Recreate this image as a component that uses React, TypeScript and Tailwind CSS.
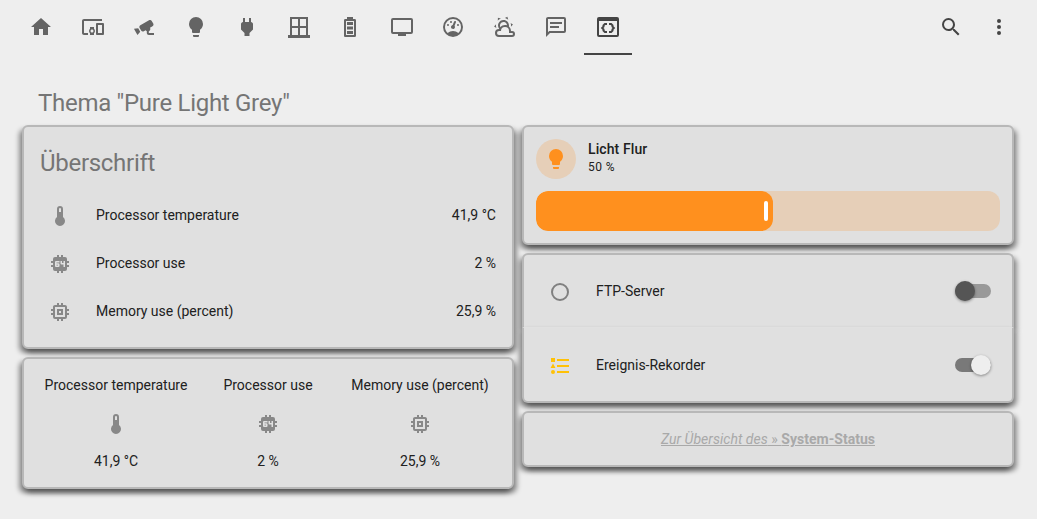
import type { ReactNode } from "react";

const ICONS = {
  home: "M10,20V14H14V20H19V12H22L12,3L2,12H5V20H10Z",
  devices:
    "M3 6h18V4H3c-1.1 0-2 .9-2 2v12c0 1.1.9 2 2 2h4v-2H3V6zm10 6H9v1.78c-.61.55-1 1.33-1 2.22s.39 1.67 1 2.22V20h4v-1.78c.61-.55 1-1.34 1-2.22s-.39-1.67-1-2.22V12zm-2 5.5c-.83 0-1.5-.67-1.5-1.5s.67-1.5 1.5-1.5 1.5.67 1.5 1.5-.67 1.5-1.5 1.5zM22 8h-6c-.5 0-1 .5-1 1v10c0 .5.5 1 1 1h6c.5 0 1-.5 1-1V9c0-.5-.5-1-1-1zm-1 10h-4v-8h4v8z",
  cctv: "M18.15,4.94C17.77,4.91 17.37,5 17,5.2L8.35,10.2C7.39,10.76 7.07,12 7.62,12.94L9.12,15.53C9.67,16.5 10.89,16.82 11.85,16.27L13.65,15.23C13.92,15.69 14.32,16.06 14.81,16.27V18.04C14.81,19.13 15.7,20 16.81,20H22V18.04H16.81V16.27C17.72,15.87 18.31,14.97 18.31,14C18.31,13.54 18.19,13.11 17.97,12.73L20.5,11.27C21.47,10.71 21.8,9.5 21.24,8.53L19.74,5.94C19.4,5.34 18.79,5 18.15,4.94M6.22,13.17L2,13.87L2.75,15.17L4.75,18.63L5.5,19.93L8.22,16.63L6.22,13.17Z",
  bulb: "M12,2A7,7 0 0,0 5,9C5,11.38 6.19,13.47 8,14.74V17A1,1 0 0,0 9,18H15A1,1 0 0,0 16,17V14.74C17.81,13.47 19,11.38 19,9A7,7 0 0,0 12,2M9,21A1,1 0 0,0 10,22H14A1,1 0 0,0 15,21V20H9V21Z",
  plug: "M16,7V3H14V7H10V3H8V7H8C7,7 6,8 6,9V14.5L9.5,18V21H14.5V18L18,14.5V9C18,8 17,7 16,7Z",
  window: "M21 20V2H3V20H1V23H23V20M19 4V11H13V4M5 4H11V11H5M5 20V13H11V20M13 20V13H19V20Z",
  battery:
    "M16,20H8V6H16M16.67,4H15V2H9V4H7.33A1.33,1.33 0 0,0 6,5.33V20.67C6,21.4 6.6,22 7.33,22H16.67A1.33,1.33 0 0,0 18,20.67V5.33C18,4.6 17.4,4 16.67,4M15,16H9V19H15V16M15,7H9V10H15V7M15,11.5H9V14.5H15V11.5Z",
  tv: "M21,17H3V5H21M21,3H3A2,2 0 0,0 1,5V17A2,2 0 0,0 3,19H8V21H16V19H21A2,2 0 0,0 23,17V5A2,2 0 0,0 21,3Z",
  gauge:
    "M12,2A10,10 0 0,0 2,12A10,10 0 0,0 12,22A10,10 0 0,0 22,12A10,10 0 0,0 12,2M12,4A8,8 0 0,1 20,12C20,14.4 19,16.5 17.3,18C15.9,16.7 14,16 12,16C10,16 8.2,16.7 6.7,18C5,16.5 4,14.4 4,12A8,8 0 0,1 12,4M14,5.89C13.62,5.9 13.26,6.15 13.1,6.54L11.81,9.77L11.71,10C11,10.13 10.41,10.6 10.14,11.26C9.73,12.29 10.23,13.45 11.26,13.86C12.29,14.27 13.45,13.77 13.86,12.74C14.12,12.08 14,11.32 13.57,10.76L13.67,10.5L14.96,7.29L14.97,7.26C15.17,6.75 14.92,6.17 14.41,5.96C14.28,5.91 14.15,5.89 14,5.89M10,6A1,1 0 0,0 9,7A1,1 0 0,0 10,8A1,1 0 0,0 11,7A1,1 0 0,0 10,6M7,9A1,1 0 0,0 6,10A1,1 0 0,0 7,11A1,1 0 0,0 8,10A1,1 0 0,0 7,9M17,9A1,1 0 0,0 16,10A1,1 0 0,0 17,11A1,1 0 0,0 18,10A1,1 0 0,0 17,9Z",
  weather:
    "M12.74,5.47C15.1,6.5 16.35,9.03 15.92,11.46C17.19,12.56 18,14.19 18,16V16.17C18.31,16.06 18.65,16 19,16A3,3 0 0,1 22,19A3,3 0 0,1 19,22H6A4,4 0 0,1 2,18A4,4 0 0,1 6,14H6.27C5,12.45 4.6,10.24 5.5,8.26C6.72,5.5 9.97,4.24 12.74,5.47M11.93,7.3C10.16,6.5 8.09,7.31 7.31,9.07C6.85,10.09 6.93,11.22 7.41,12.13C8.5,10.83 10.16,10 12,10C12.7,10 13.38,10.12 14,10.34C13.94,9.06 13.18,7.86 11.93,7.3M13.55,3.64C13,3.4 12.45,3.23 11.88,3.12L14.37,1.82L15.27,4.71C14.76,4.29 14.19,3.93 13.55,3.64M6.09,4.44C5.6,4.79 5.17,5.19 4.8,5.63L4.91,2.82L7.87,3.5C7.25,3.71 6.65,4.03 6.09,4.44M18,9.71C17.91,9.12 17.78,8.55 17.59,8L19.97,9.5L17.92,11.73C18.03,11.08 18.05,10.4 18,9.71M3.04,11.3C3.11,11.9 3.24,12.47 3.43,13L1.06,11.5L3.1,9.28C2.97,9.93 2.95,10.61 3.04,11.3M19,18H16V16A4,4 0 0,0 12,12A4,4 0 0,0 8,16H6A2,2 0 0,0 4,18A2,2 0 0,0 6,20H19A1,1 0 0,0 20,19A1,1 0 0,0 19,18Z",
  message:
    "M20,2A2,2 0 0,1 22,4V16A2,2 0 0,1 20,18H6L2,22V4C2,2.89 2.9,2 4,2H20M4,4V17.17L5.17,16H20V4H4M6,7H18V9H6V7M6,11H15V13H6V11Z",
  iframe:
    "M21,2H3A2,2 0 0,0 1,4V20A2,2 0 0,0 3,22H21A2,2 0 0,0 23,20V4A2,2 0 0,0 21,2M21,20H3V6H21V20M11,8H8.5L6.5,10V11.2L4.8,13L6.5,14.8V16L8.5,18H11V16H9.3L8.5,15.2V14L7.5,13L8.5,12V10.8L9.3,10H11V8M13,8H15.5L17.5,10V11.2L19.2,13L17.5,14.8V16L15.5,18H13V16H14.7L15.5,15.2V14L16.5,13L15.5,12V10.8L14.7,10H13V8Z",
  search:
    "M9.5,3A6.5,6.5 0 0,1 16,9.5C16,11.11 15.41,12.59 14.44,13.73L14.71,14H15.5L20.5,19L19,20.5L14,15.5V14.71L13.73,14.44C12.59,15.41 11.11,16 9.5,16A6.5,6.5 0 0,1 3,9.5A6.5,6.5 0 0,1 9.5,3M9.5,5C7,5 5,7 5,9.5C5,12 7,14 9.5,14C12,14 14,12 14,9.5C14,7 12,5 9.5,5Z",
  dots: "M12,16A2,2 0 0,1 14,18A2,2 0 0,1 12,20A2,2 0 0,1 10,18A2,2 0 0,1 12,16M12,10A2,2 0 0,1 14,12A2,2 0 0,1 12,14A2,2 0 0,1 10,12A2,2 0 0,1 12,10M12,4A2,2 0 0,1 14,6A2,2 0 0,1 12,8A2,2 0 0,1 10,6A2,2 0 0,1 12,4Z",
  thermometer: "M15 13V5A3 3 0 0 0 9 5V13A5 5 0 1 0 15 13M12 4A1 1 0 0 1 13 5V8H11V5A1 1 0 0 1 12 4Z",
  cpu: "M9,3V5H7A2,2 0 0,0 5,7V9H3V11H5V13H3V15H5V17A2,2 0 0,0 7,19H9V21H11V19H13V21H15V19H17A2,2 0 0,0 19,17V15H21V13H19V11H21V9H19V7A2,2 0 0,0 17,5H15V3H13V5H11V3M8,9H11.5V10.5H8.5V11.25H10.5A1,1 0 0,1 11.5,12.25V14A1,1 0 0,1 10.5,15H8A1,1 0 0,1 7,14V10A1,1 0 0,1 8,9M12.5,9H14V11H15.5V9H17V15H15.5V12.5H13.5A1,1 0 0,1 12.5,11.5M8.5,12.75V13.5H10V12.75",
  memory:
    "M17,17H7V7H17M21,11V9H19V7C19,5.89 18.1,5 17,5H15V3H13V5H11V3H9V5H7C5.89,5 5,5.89 5,7V9H3V11H5V13H3V15H5V17A2,2 0 0,0 7,19H9V21H11V19H13V21H15V19H17A2,2 0 0,0 19,17V15H21V13H19V11M13,13H11V11H13M15,9H9V15H15V9Z",
  circle:
    "M12,19A7,7 0 0,1 5,12A7,7 0 0,1 12,5A7,7 0 0,1 19,12A7,7 0 0,1 12,19M12,3A9,9 0 0,0 3,12A9,9 0 0,0 12,21A9,9 0 0,0 21,12A9,9 0 0,0 12,3Z",
  list: "M5,9.5L7.5,14H2.5L5,9.5M3,4H7V8H3V4M5,20A2,2 0 0,0 7,18A2,2 0 0,0 5,16A2,2 0 0,0 3,18A2,2 0 0,0 5,20M9,5V7H21V5H9M9,19H21V17H9V19M9,13H21V11H9V13Z",
};

type IconName = keyof typeof ICONS;

function Icon({ name, className = "" }: { name: IconName; className?: string }) {
  return (
    <svg viewBox="0 0 24 24" fill="currentColor" className={`size-6 shrink-0 ${className}`}>
      <path d={ICONS[name]} />
    </svg>
  );
}

const TABS: IconName[] = [
  "home", "devices", "cctv", "bulb", "plug", "window",
  "battery", "tv", "gauge", "weather", "message", "iframe",
];

const SENSORS: { icon: IconName; name: string; value: string }[] = [
  { icon: "thermometer", name: "Processor temperature", value: "41,9 °C" },
  { icon: "cpu", name: "Processor use", value: "2 %" },
  { icon: "memory", name: "Memory use (percent)", value: "25,9 %" },
];

const SURFACE =
  "border-[#b8b8b8] bg-[#e0e0e0] shadow-[-3px_4px_5px_rgba(0,0,0,0.4),3px_4px_5px_rgba(0,0,0,0.4)]";

function Card({ className = "", children }: { className?: string; children: ReactNode }) {
  return <section className={`rounded-md border-2 ${SURFACE} ${className}`}>{children}</section>;
}

function Toggle({ on = false }: { on?: boolean }) {
  return (
    <div className={`flex h-3.5 w-9 items-center rounded-full ${on ? "justify-end bg-[#797979]" : "bg-[#999999]"}`}>
      <span
        className={`size-5 shrink-0 rounded-full shadow-[0_1px_3px_rgba(0,0,0,0.4)] ${on ? "bg-[#eeeeee]" : "bg-[#555555]"}`}
      />
    </div>
  );
}

function EntityRow({ icon, name, on, color }: { icon: IconName; name: string; on?: boolean; color: string }) {
  return (
    <div className="flex h-10 items-center pl-6 pr-[21px]">
      <Icon name={icon} className={`relative top-px size-6 ${color}`} />
      <span className="ml-6 grow">{name}</span>
      <Toggle on={on} />
    </div>
  );
}

export default function App() {
  return (
    <div className="h-[519px] w-[1037px] overflow-hidden bg-[#eeeeee] font-[Roboto,sans-serif] text-sm leading-5 text-[#212121]">
      <header className="flex h-14 items-start pl-[17px] pr-3.5">
        <nav className="flex grow gap-[3.52px] text-[#646464]">
          {TABS.map((tab) => (
            <div
              key={tab}
              className={`flex h-[55px] w-12 justify-center border-b-2 pt-[15px] ${tab === "iframe" ? "border-[#444444] text-[#444444]" : "border-transparent"}`}
            >
              <Icon name={tab} />
            </div>
          ))}
        </nav>
        <div className="flex gap-6 pt-[15px] text-[#444444]">
          <Icon name="search" />
          <Icon name="dots" className="mr-3" />
        </div>
      </header>

      <h1 className="ml-[38px] mt-[31px] h-[38px] text-2xl leading-8 tracking-[-0.012em] text-[#757575]">
        Thema "Pure Light Grey"
      </h1>

      <main className="grid grid-cols-[492px_492px] items-start gap-x-2 pl-[22px]">
        <div className="flex flex-col gap-2">
          <Card className="h-56 px-4">
            <h2 className="mb-4 pt-5 text-2xl leading-8 tracking-[-0.012em] text-[#757575]">Überschrift</h2>
            <div className="flex flex-col gap-2">
              {SENSORS.map((s) => (
                <div key={s.name} className="flex h-10 items-center pl-2">
                  <Icon name={s.icon} className="relative top-px text-[#888888]" />
                  <span className="ml-6 grow">{s.name}</span>
                  <span>{s.value}</span>
                </div>
              ))}
            </div>
          </Card>
          <Card className="grid h-[132px] grid-cols-3 px-4 pt-4 text-center">
            {SENSORS.map((s) => (
              <div key={s.name} className="-mx-2 flex flex-col items-center whitespace-nowrap">
                <span>{s.name}</span>
                <Icon name={s.icon} className="mb-[15px] mt-[17px] text-[#888888]" />
                <span>{s.value}</span>
              </div>
            ))}
          </Card>
        </div>

        <div className="flex flex-col gap-2">
          <Card className="flex h-[120px] flex-col gap-3 p-3">
            <div className="flex h-10 items-center gap-3">
              <div className="flex size-10 items-center justify-center rounded-full bg-[#e6cfb8] text-[#ff901e]">
                <Icon name="bulb" />
              </div>
              <div className="flex flex-col pb-1">
                <span className="font-medium tracking-[0.1px]">Licht Flur</span>
                <span className="text-xs leading-4 tracking-[0.4px]">50 %</span>
              </div>
            </div>
            <div className="h-10 overflow-hidden rounded-xl bg-[#e6cfb8]">
              <div className="flex h-full w-[51%] items-center justify-end rounded-xl bg-[#ff901e] pr-[5px]">
                <span className="h-5 w-1 rounded-full bg-white" />
              </div>
            </div>
          </Card>

          <div>
            <section className={`h-[74px] rounded-t-md border-2 border-b-0 pt-4 ${SURFACE}`}>
              <EntityRow icon="circle" name="FTP-Server" color="text-[#808080]" />
            </section>
            <section className={`h-[76px] rounded-b-md border-2 border-t border-t-[#e1e1e1] pt-[17px] ${SURFACE}`}>
              <EntityRow icon="list" name="Ereignis-Rekorder" on color="text-[#ffc107]" />
            </section>
          </div>

          <Card className="flex h-14 items-center justify-center text-[#a9a9a9]">
            <a className="tracking-[0.02px] underline">
              <em>Zur Übersicht des</em> » <b className="font-bold">System-Status</b>
            </a>
          </Card>
        </div>
      </main>
    </div>
  );
}
